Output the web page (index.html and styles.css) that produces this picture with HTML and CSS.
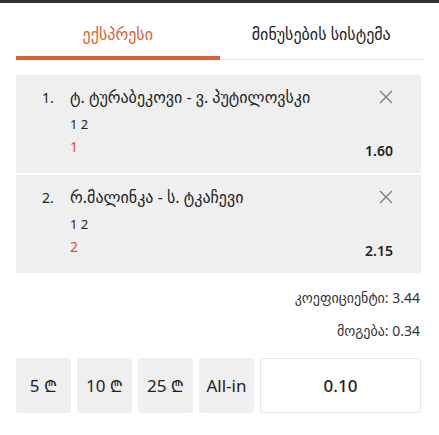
FILE: index.html
```html
<!DOCTYPE html>
<html lang="ka">
<head>
<meta charset="utf-8">
<title>Betslip</title>
<link rel="stylesheet" href="styles.css">
</head>
<body>
<div class="topbar"></div>
<div class="tabs">
  <div class="tab tab-active">ექსპრესი</div>
  <div class="tab">მინუსების სისტემა</div>
</div>
<div class="cards">
  <div class="card">
    <div class="card-head">
      <span class="num">1.</span>
      <span class="title">ტ. ტურაბეკოვი - ვ. პუტილოვსკი</span>
      <svg class="close" viewBox="0 0 14 14" width="14" height="14"><path d="M1 1L13 13M13 1L1 13" stroke="#7a7a7a" stroke-width="1.3" fill="none"/></svg>
    </div>
    <div class="market">1 2</div>
    <div class="card-foot">
      <span class="pick">1</span>
      <span class="odds">1.60</span>
    </div>
  </div>
  <div class="card">
    <div class="card-head">
      <span class="num">2.</span>
      <span class="title">რ.მალინკა - ს. ტკაჩევი</span>
      <svg class="close" viewBox="0 0 14 14" width="14" height="14"><path d="M1 1L13 13M13 1L1 13" stroke="#7a7a7a" stroke-width="1.3" fill="none"/></svg>
    </div>
    <div class="market">1 2</div>
    <div class="card-foot">
      <span class="pick">2</span>
      <span class="odds">2.15</span>
    </div>
  </div>
</div>
<div class="summary">
  <div class="sum-line">კოეფიციენტი: 3.44</div>
  <div class="sum-line">მოგება: 0.34</div>
</div>
<div class="stakes">
  <button class="chip">5 ₾</button>
  <button class="chip">10 ₾</button>
  <button class="chip">25 ₾</button>
  <button class="chip">All-in</button>
  <div class="amount">0.10</div>
</div>
</body>
</html>
```
FILE: styles.css
```css
html, body {
  margin: 0;
  padding: 0;
  background: #fff;
}
body {
  font-family: "Noto Sans", "DejaVu Sans", sans-serif;
  color: #222;
  width: 439px;
  height: 435px;
  overflow: hidden;
}
.topbar {
  height: 3px;
  background: #333;
}
.tabs {
  display: flex;
  align-items: flex-end;
  padding: 0 16px 0 16px;
}
.tab {
  flex: 1;
  text-align: center;
  font-size: 16px;
  line-height: 20px;
  padding-top: 21px;
  padding-bottom: 12px;
  border-bottom: 1px solid #e6e6e6;
  color: #222;
}
.tab-active {
  color: #e0602f;
  border-bottom: 4px solid #e0602f;
  border-radius: 2px 2px 0 0;
  padding-bottom: 12px;
}
.tab + .tab {
  padding-bottom: 15px;
}
.cards {
  margin-top: 15px;
  padding: 0 18px 0 16px;
  display: flex;
  flex-direction: column;
  gap: 2px;
}
.card {
  background: #efefef;
  padding: 12px 28px 12px 26px;
}
.card-head {
  display: flex;
  align-items: center;
  height: 20px;
  font-size: 14px;
  color: #222;
}
.num {
  width: 28px;
  flex: none;
}
.title {
  flex: 1;
  font-size: 16px;
}
.close {
  flex: none;
  display: block;
}
.market {
  margin-top: 7px;
  margin-left: 28px;
  font-size: 13px;
  line-height: 20px;
  color: #222;
}
.card-foot {
  margin-top: 3px;
  margin-left: 28px;
  display: flex;
  justify-content: space-between;
  align-items: flex-start;
  height: 24px;
}
.pick {
  color: #dc5324;
  font-size: 14px;
  line-height: 20px;
}
.odds {
  margin-top: 4px;
  font-size: 14px;
  line-height: 20px;
  font-weight: 600;
  color: #222;
}
.summary {
  margin-top: 15px;
  padding-right: 19px;
  text-align: right;
  font-size: 14px;
  color: #333;
}
.sum-line {
  line-height: 20px;
}
.sum-line + .sum-line {
  margin-top: 13px;
}
.stakes {
  margin-top: 17px;
  padding: 0 18px 0 16px;
  display: flex;
  gap: 6px;
  height: 55px;
}
.chip {
  width: 55px;
  border: none;
  background: #efefef;
  border-radius: 3px;
  font-family: "Noto Sans", "DejaVu Sans", sans-serif;
  font-size: 17px;
  color: #222;
  padding: 0;
}
.amount {
  flex: 1;
  border: 1px solid #e6e6e6;
  border-radius: 3px;
  display: flex;
  align-items: center;
  justify-content: center;
  font-size: 17px;
  font-weight: 500;
  color: #222;
}
```
